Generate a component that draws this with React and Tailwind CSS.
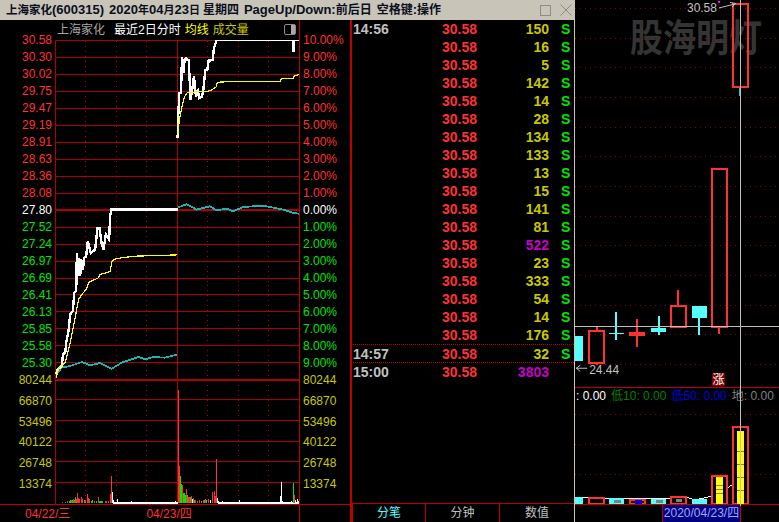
const red = "#ff3232";
const grid = "#b00000";

const prices = [
  ["30.58", "10.00%", "r"], ["30.30", "9.00%", "r"], ["30.02", "8.00%", "r"], ["29.75", "7.00%", "r"],
  ["29.47", "6.00%", "r"], ["29.19", "5.00%", "r"], ["28.91", "4.00%", "r"], ["28.63", "3.00%", "r"],
  ["28.36", "2.00%", "r"], ["28.08", "1.00%", "r"], ["27.80", "0.00%", "w"], ["27.52", "1.00%", "g"],
  ["27.24", "2.00%", "g"], ["26.97", "3.00%", "g"], ["26.69", "4.00%", "g"], ["26.41", "5.00%", "g"],
  ["26.13", "6.00%", "g"], ["25.85", "7.00%", "g"], ["25.58", "8.00%", "g"], ["25.30", "9.00%", "g"],
];
const priceColor = { r: "text-[#ff3232]", w: "text-white", g: "text-[#00e600]" };
const volumes = ["66870", "53496", "40122", "26748", "13374"];

const ticks = [
  ["14:56", 150], ["", 16], ["", 5], ["", 142], ["", 14], ["", 28], ["", 134], ["", 133], ["", 13], ["", 15],
  ["", 141], ["", 81], ["", 522], ["", 23], ["", 333], ["", 54], ["", 14], ["", 176], ["14:57", 32], ["15:00", 3803],
];

// traced from the picture at 3x, hence the helper
const pts = (list, ox, oy) => list.map(([x, y]) => `${ox + x / 3},${oy + y / 3}`).join(" ");

const day1White = pts([[17,525],[22,510],[35,500],[38,465],[45,460],[48,430],[55,395],[60,345],[68,335],[72,280],[78,275],[80,160],[84,230],[87,175],[90,230],[93,180],[98,210],[102,175],[108,170],[113,125],[122,160],[135,150],[142,85],[148,85],[155,135],[160,150],[167,105],[177,120],[180,50],[184,30],[383,30]], 50, 200);
const day1Avg = pts([[18,535],[25,505],[45,490],[60,430],[72,370],[85,300],[95,285],[108,270],[116,248],[145,235],[150,225],[180,216],[186,183],[200,177],[250,170],[380,166]], 50, 200);
const day1Teal = pts([[17,525],[35,505],[60,500],[95,488],[120,498],[150,491],[185,508],[215,490],[265,473],[285,480],[310,473],[345,475],[380,466]], 50, 200);
const day2White = pts([[23,325],[24,270],[28,190],[33,190],[36,80],[40,130],[44,90],[48,85],[52,90],[56,90],[58,130],[62,210],[68,170],[72,140],[78,200],[84,185],[88,205],[96,200],[100,180],[106,120],[112,120],[116,92],[128,90],[132,55],[140,30],[365,30],[369,30],[369,62],[373,62],[373,30],[390,30]], 170, 30);
const day2Avg = pts([[23,320],[28,270],[36,230],[44,200],[52,188],[80,186],[110,185],[125,180],[140,170],[142,157],[180,155],[330,155],[335,147],[370,145],[375,137],[388,134]], 170, 30);
const day2Teal = pts([[535,53],[560,44],[590,60],[630,50],[650,62],[680,57],[700,65],[730,52],[790,48],[850,60],[880,70],[897,72]], 0, 190);

const barColor = { r: red, g: "#00e600", w: "#ffffff" };
const bars = [
  [62,1,"r"],[65,1,"g"],[67,2,"r"],[69,2,"g"],[70,3,"g"],[71,3,"r"],[72,3,"g"],[73,4,"r"],[74,3,"r"],[75,6,"g"],[76,4,"r"],[77,10,"r"],[78,5,"r"],[79,4,"r"],
  [81,6,"r"],[82,4,"r"],[84,3,"g"],[85,3,"r"],[87,9,"r"],[88,5,"r"],[89,4,"r"],[91,2,"g"],[92,3,"g"],[94,2,"r"],[96,2,"g"],[98,6,"r"],[99,2,"g"],[100,2,"g"],[101,2,"g"],[102,2,"g"],
  [105,2,"r"],[106,2,"r"],[108,2,"r"],[110,9,"r"],[111,27,"r"],[112,11,"w"],[113,3,"w"],[117,4,"w"],[131,2,"w"],[175,2,"w"],
  [178,113,"r"],[179,37,"r"],[180,27,"g"],[181,19,"g"],[182,18,"r"],[183,10,"g"],[184,10,"g"],[185,8,"g"],[186,14,"r"],[187,8,"g"],[188,6,"r"],[189,6,"r"],[190,6,"g"],[191,7,"r"],[192,4,"w"],[193,5,"r"],[194,3,"g"],[195,3,"r"],
  [197,2,"r"],[199,3,"r"],[201,2,"g"],[203,3,"r"],[204,3,"g"],[205,4,"r"],[206,3,"g"],[208,4,"r"],[210,3,"w"],[212,11,"r"],[214,12,"r"],[215,7,"r"],[216,44,"r"],[217,5,"w"],[218,2,"w"],[222,2,"w"],[223,1,"w"],
  [239,3,"w"],[280,7,"w"],[281,21,"w"],[282,2,"w"],[291,2,"w"],[292,1,"w"],[293,20,"g"],[294,8,"r"],[295,3,"w"],[297,4,"w"],[298,2,"w"],[299,5,"w"],
];

const Candle = ({ x, w = 15, top, bottom, hollow, color, wickTop, wickBottom, wickColor }) => {
  const cx = x + w / 2;
  return (
    <g>
      {wickTop != null && <line x1={cx} x2={cx} y1={wickTop} y2={top} stroke={wickColor || color} strokeWidth="2" />}
      {wickBottom != null && <line x1={cx} x2={cx} y1={bottom} y2={wickBottom} stroke={wickColor || color} strokeWidth="2" />}
      <rect x={x} y={top} width={w} height={bottom - top} fill={hollow ? "none" : color} stroke={hollow ? color : "none"} strokeWidth={hollow ? 2 : 0} />
    </g>
  );
};

function MinuteChart() {
  return (
    <svg width="244" height="465" viewBox="55 40 244 465" shapeRendering="crispEdges" className="block">
      {prices.map((p, i) => (
        <line key={i} x1="55" x2="299" y1={40.5 + 17 * i} y2={40.5 + 17 * i} stroke={grid} strokeWidth={i === 10 ? 2 : 1} />
      ))}
      <line x1="55" x2="299" y1="380.5" y2="380.5" stroke={grid} strokeWidth="2" />
      {[400.5, 421.5, 442.5, 462.5, 483.5].map((y) => (
        <line key={y} x1="55" x2="299" y1={y} y2={y} stroke={grid} />
      ))}
      {[85.5, 116.5, 146.5, 207.5, 238.5, 268.5].map((x) => (
        <line key={x} x1={x} x2={x} y1="41" y2="504" stroke={grid} strokeDasharray="1 4" />
      ))}
      <line x1="55.5" x2="55.5" y1="40" y2="505" stroke={grid} />
      <line x1="177.5" x2="177.5" y1="40" y2="505" stroke={grid} />

      <polyline points={day1Teal} fill="none" stroke="#19b5b5" strokeWidth="1.8" />
      <polyline points={day2Teal} fill="none" stroke="#19b5b5" strokeWidth="1.8" />
      <polyline points={day1White} fill="none" stroke="#fff" strokeWidth="2.4" />
      <polyline points={day2White} fill="none" stroke="#fff" strokeWidth="2.4" />
      <polyline points={day1Avg} fill="none" stroke="#ffff00" strokeWidth="1.2" />
      <polyline points={day2Avg} fill="none" stroke="#ffff00" strokeWidth="1.2" />

      <rect x="113" y="503" width="65" height="1.5" fill="#fff" />
      <rect x="218" y="503" width="81" height="1.5" fill="#fff" />
      {bars.map(([x, h, c]) => (
        <rect key={x} x={x} y={504 - h} width="1" height={h} fill={barColor[c]} />
      ))}
    </svg>
  );
}

function KlineChart() {
  return (
    <svg width="204" height="388" viewBox="575 0 204 388" className="block">
      <text transform="translate(630 51) scale(0.87 1)" className="fill-[#343434] text-[38px] font-bold">股海明灯</text>
      <g shapeRendering="crispEdges">
        {[8.5, 38.5, 67.5, 97.5, 127.5, 156.5, 186.5, 216.5, 246.5, 276.5, 306.5, 335.5, 365.5].map((y) => (
          <line key={y} x1="575" x2="779" y1={y} y2={y} stroke="#8c0000" strokeDasharray="1 4" />
        ))}
        <Candle x={575} w={8} top={337} bottom={362} color="#55ffff" />
        <Candle x={589} top={332} bottom={364} hollow color={red} wickTop={328} wickBottom={366} />
        <line x1="616" x2="616" y1="313" y2="341" stroke="#55ffff" strokeWidth="2" />
        <line x1="609" x2="624" y1="334" y2="334" stroke="#55ffff" />
        <Candle x={629} w={16} top={333} bottom={337} color={red} wickTop={320} wickBottom={348} />
        <Candle x={651} top={329} bottom={333} color="#55ffff" wickTop={317} wickBottom={336} />
        <Candle x={671} top={307} bottom={328} hollow color={red} wickTop={291} />
        <Candle x={692} top={307} bottom={319} color="#55ffff" wickBottom={336} />
        <Candle x={712} top={169} bottom={328} hollow color={red} wickBottom={335} />
        <Candle x={733} top={4} bottom={87} hollow color={red} wickBottom={96} wickColor="#19c8c8" />
        <rect x="718" y="1" width="2" height="2" fill="#ff00ff" />
        <line x1="575" x2="779" y1="327.5" y2="327.5" stroke="#c0c0c0" />
      </g>
      <text x="687" y="12" className="fill-[#c0c0c0] text-[12px]">30.58</text>
      <path d="M719 8 L735 4 M730 2.5 L736 3.5 L732 7" fill="none" stroke="#c0c0c0" />
      <path d="M576 369 L587 369 M580 366 L576 369 L580 372" fill="none" stroke="#c0c0c0" />
      <text x="589" y="375" className="fill-[#c0c0c0] text-[12px]">24.44</text>
      <rect x="712" y="374" width="13" height="13" fill="#800000" />
      <text x="712.5" y="385" className="fill-white text-[12px]">涨</text>
    </svg>
  );
}

function VolumeBars() {
  const Box = ({ x, top, fill, inner, innerTop = top + 3, innerBottom = 505 }) => (
    <g>
      <rect x={x} y={top} width="15" height={505 - top} fill={fill || "#000"} stroke={fill ? "none" : red} strokeWidth={fill ? 0 : 2} />
      {inner && <rect x={x + 4.5} y={innerTop} width="7" height={innerBottom - innerTop} fill={inner} />}
    </g>
  );
  return (
    <svg width="204" height="101" viewBox="575 404 204 101" shapeRendering="crispEdges" className="block">
      {[415.5, 445.5, 475.5].map((y) => (
        <line key={y} x1="575" x2="779" y1={y} y2={y} stroke="#8c0000" strokeDasharray="1 4" />
      ))}
      <polyline points="575,499 606,499.5 650,499.5 688,499 695,501 705,499 712,497 728,489 732,486" fill="none" stroke="#fff" />
      <rect x="575" y="498" width="8" height="7" fill="#55ffff" />
      <Box x={589} top={499} />
      <Box x={609} top={499} fill="#55ffff" inner="#808080" innerTop={501} innerBottom={504} />
      <Box x={630} top={501} inner="#0000e0" innerTop={501} />
      <Box x={651} top={500} fill="#55ffff" inner="#808080" innerTop={501} innerBottom={504} />
      <Box x={671} top={498} inner="#808080" innerTop={500} innerBottom={503} />
      <Box x={692} top={500} fill="#55ffff" />
      <Box x={712} top={477} inner="#ffff00" innerTop={478} />
      <Box x={733} top={428} inner="#ffff00" innerTop={432} />
      {[487, 491, 495].map((y) => (
        <line key={y} x1="716" x2="723" y1={y} y2={y} stroke="#808080" />
      ))}
      {[453, 466, 479, 492].map((y) => (
        <line key={y} x1="737" x2="744" y1={y} y2={y} stroke="#808080" />
      ))}
    </svg>
  );
}

export default function App() {
  return (
    <div className="w-[779px] h-[522px] bg-black overflow-hidden flex text-[12px] [font-family:'Liberation_Sans','Noto_Sans_CJK_SC',sans-serif]">
      {/* main window with title bar */}
      <div className="w-[574px] h-full flex flex-col">
        <div className="h-5 shrink-0 bg-[#c8c4b8] flex items-center justify-between pl-[6px] pr-[2px] text-[13px] font-bold text-[#0a0f1e] whitespace-pre leading-5">
          <div className="flex items-center">
            <span className="text-[11.5px]">上海家化</span>
            <span>(600315)</span>
            <span className="ml-[5px]">2020<span className="text-[11px]">年</span>04<span className="text-[11px]">月</span>23<span className="text-[11px]">日</span></span>
            <span className="ml-[3px] text-[12px]">星期四</span>
            <span className="ml-[5px]">PageUp/Down:</span>
            <span className="text-[12px]">前后日</span>
            <span className="ml-[5px] text-[12px]">空格键</span>
            <span>:</span>
            <span className="text-[12px]">操作</span>
          </div>
          <div className="flex items-center gap-[9px]">
            <div className="w-[11px] h-[11px] border border-[#8c8c8c]" />
            <svg width="12" height="12" viewBox="0 0 12 12" className="block">
              <path d="M0.5 0.5 L11.5 11.5 M11.5 0.5 L0.5 11.5" stroke="#8c8c8c" fill="none" />
            </svg>
          </div>
        </div>

        <div className="flex-1 flex min-h-0">
          {/* minute chart */}
          <div className="w-[350px] flex flex-col">
            <div className="h-[485px] flex border-b border-[#c00000]">
              <div className="w-[55px] pt-[12px] pr-[3px] text-right">
                {prices.map(([p, , c]) => (
                  <div key={p} className={`h-[17px] leading-[17px] ${priceColor[c]}`}>{p}</div>
                ))}
                <div className="h-[17px] leading-[17px] text-[#c8c800]">80244</div>
                {volumes.map((v) => (
                  <div key={v} className="h-[20.7px] leading-[25px] text-[#c8c800]">{v}</div>
                ))}
              </div>
              <div className="w-[244px] flex flex-col">
                <div className="h-5 flex items-center pl-[2px] whitespace-pre">
                  <span className="text-[#a8a8a8]">上海家化</span>
                  <span className="ml-[9px] text-white">最近2日分时</span>
                  <span className="ml-[4px] text-[#ffff00]">均线</span>
                  <span className="ml-[4px] text-[#c8c800]">成交量</span>
                  <span className="ml-auto mr-[3px] w-[12px] h-[11px] rounded-[2px] border border-[#8c8c8c] flex justify-end">
                    <span className="w-[4px] h-full bg-[#a8a8a8]" />
                  </span>
                </div>
                <MinuteChart />
              </div>
              <div className="w-[51px] pt-[12px] pl-[3px] border-l border-[#c00000]">
                {prices.map(([p, pct, c]) => (
                  <div key={p} className={`h-[17px] leading-[17px] ${priceColor[c]}`}>{pct}</div>
                ))}
                <div className="h-[17px] leading-[17px] text-[#c8c800]">80244</div>
                {volumes.map((v) => (
                  <div key={v} className="h-[20.7px] leading-[25px] text-[#c8c800]">{v}</div>
                ))}
              </div>
            </div>
            <div className="flex-1 flex">
              <div className="w-[299px] pl-[25px] flex items-center gap-[76px] text-[#ff3232] whitespace-pre">
                <span>04/22/三</span>
                <span>04/23/四</span>
              </div>
              <div className="flex-1 border-l border-[#c00000]" />
            </div>
          </div>

          {/* tick list */}
          <div className="w-[224px] border-l-2 border-[#c00000] flex flex-col font-bold text-[14px]">
            <div className="h-[484px] pl-[1px]">
              {ticks.map(([time, vol], i) => (
                <div key={i} className={`h-[18px] leading-[18px] flex ${i >= 18 ? "border-t border-dotted border-[#c00000]" : ""}`}>
                  <span className="w-[89px] text-[#c0c0c0]">{time}</span>
                  <span className="w-[36px] text-[#ff3232]">30.58</span>
                  <span className={`w-[71px] text-right ${vol >= 500 ? "text-[#c800c8]" : "text-[#c8c800]"}`}>{vol}</span>
                  {vol !== 3803 && <span className="ml-[12px] text-[#00e600]">S</span>}
                </div>
              ))}
            </div>
            <div className="flex-1 flex border-t border-[#c00000] text-[12px] font-normal">
              <div className="w-[73px] flex items-center justify-center text-[#55ffff] border-l border-[#c00000]">分笔</div>
              <div className="w-[74px] flex items-center justify-center text-[#c0c0c0] border-l border-[#c00000]">分钟</div>
              <div className="flex-1 flex items-center justify-center text-[#c0c0c0] border-l border-[#c00000]">数值</div>
            </div>
          </div>
        </div>
      </div>

      {/* day candles */}
      <div className="flex-1 h-full border-l border-[#c8c4b8] flex flex-col relative">
        <KlineChart />
        <div className="h-4 border-t border-[#c00000] flex items-center pl-[1px] whitespace-pre gap-[5px]">
          <span className="text-white">: 0.00</span>
          <span className="text-[#008000]">低10: 0.00</span>
          <span className="text-[#0000e0]">低50: 0.00</span>
          <span className="text-[#808080]">地: 0.00</span>
        </div>
        <VolumeBars />
        <div className="flex-1 border-t border-[#c00000] pl-[87px]">
          <div className="w-[79px] h-full bg-[#000080] border-x border-[#c00000] text-[#a0a8ff] text-center leading-[17px] whitespace-pre">2020/04/23/四</div>
        </div>
        <div className="absolute left-[165px] top-0 h-[506px] w-px bg-[#c0c0c0]" />
      </div>
    </div>
  );
}
